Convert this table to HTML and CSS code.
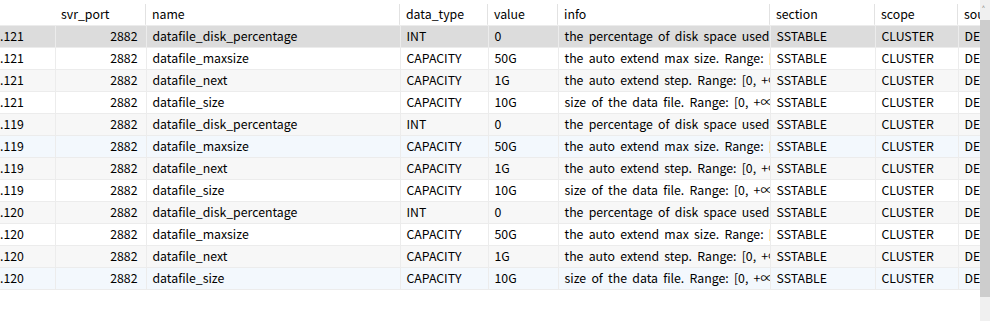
FILE: index.html
```html
<!DOCTYPE html>
<html lang="en">
<head>
  <meta charset="UTF-8">
  <title>parameters</title>
  <link rel="stylesheet" href="styles.css">
</head>
<body>

  <div class="grid-view">
    <div class="grid-wrap">
      <table class="grid">
        <colgroup>
          <col class="c-ip">
          <col class="c-port">
          <col class="c-name">
          <col class="c-type">
          <col class="c-value">
          <col class="c-info">
          <col class="c-section">
          <col class="c-scope">
          <col class="c-source">
        </colgroup>
        <thead>
          <tr>
            <th></th>
            <th>svr_port</th>
            <th>name</th>
            <th>data_type</th>
            <th>value</th>
            <th>info</th>
            <th>section</th>
            <th>scope</th>
            <th>source</th>
          </tr>
        </thead>
        <tbody id="rows"></tbody>
      </table>
    </div>
    <div class="scrollbar">
      <div class="arrow">&#708;</div>
      <div class="thumb"></div>
    </div>
  </div>

  <script>
    const params = [
      ["datafile_disk_percentage", "INT", "0", "the percentage of disk space used by the data file."],
      ["datafile_maxsize", "CAPACITY", "50G", "the auto extend max size. Range: [0, +∞)"],
      ["datafile_next", "CAPACITY", "1G", "the auto extend step. Range: [0, +∞)"],
      ["datafile_size", "CAPACITY", "10G", "size of the data file. Range: [0, +∞)"]
    ];
    const servers = [".121", ".119", ".120"];
    // fons de cada fila, com a la captura
    const tons = ["sel", "", "alt", "", "alt", "blue", "alt", "", "alt", "", "alt", "blue"];

    const tbody = document.getElementById('rows');
    let i = 0;
    servers.forEach(ip => {
      params.forEach(p => {
        const tr = document.createElement('tr');
        if (tons[i]) tr.className = tons[i];
        tr.innerHTML = `<td class="ip">${ip}</td><td class="num">2882</td>` +
          `<td>${p[0]}</td><td>${p[1]}</td><td>${p[2]}</td><td class="info">${p[3]}</td>` +
          `<td>SSTABLE</td><td>CLUSTER</td><td>DEFAULT</td>`;
        tbody.appendChild(tr);
        i++;
      });
    });
  </script>

</body>
</html>
```

FILE: styles.css
```css
:root {
  --linia: #ececec;
  --linia-cap: #e2e2e2;
  --sel: #dcdcdc;
  --alt: #f7f7f7;
  --blau: #f3f8fd;
}

body {
  margin: 0;
  background: #fff;
  color: #000;
  font-family: "Noto Sans CJK SC", "Noto Sans", sans-serif;
  font-size: 12.3px;
}

.grid-view {
  display: flex;
  height: 321px;
}

.grid-wrap {
  width: 980px;
  overflow: hidden;
}

.grid {
  table-layout: fixed;
  border-collapse: collapse;
  width: 1076px;
}

.c-ip { width: 55px; }
.c-port { width: 91px; }
.c-name { width: 254px; }
.c-type { width: 88px; }
.c-value { width: 70px; }
.c-info { width: 212px; }
.c-section { width: 105px; }
.c-scope { width: 83px; }
.c-source { width: 118px; }

th, td {
  box-sizing: border-box;
  height: 22px;
  padding: 0 6px;
  white-space: nowrap;
  overflow: hidden;
  text-overflow: clip;
  text-align: left;
  font-weight: normal;
  line-height: 21px;
}

th {
  height: 25px;
  padding-top: 5px;
  padding-bottom: 0;
  line-height: 19px;
  border-bottom: 1px solid var(--linia);
  background: linear-gradient(to bottom, #fff 4px, var(--linia-cap) 4px) right / 1px 100% no-repeat, #fff;
}

th:first-child {
  background: #fff;
}

td {
  border-right: 1px solid var(--linia);
  border-bottom: 1px solid var(--linia);
}

td.ip {
  padding-left: 0;
}

td.num {
  text-align: right;
  padding-right: 8px;
}

td.info {
  word-spacing: 2.5px;
  padding-right: 3px;
}

tr.sel td { background: var(--sel); }
tr.alt td { background: var(--alt); }
tr.blue td { background: var(--blau); }

.scrollbar {
  width: 10px;
  background: #f0f0f0;
}

.arrow {
  height: 17px;
  font-size: 10px;
  line-height: 20px;
  padding-left: 2px;
  color: #606060;
}

.thumb {
  margin-top: 3px;
  height: 277px;
  background: #cdcdcd;
}
```
